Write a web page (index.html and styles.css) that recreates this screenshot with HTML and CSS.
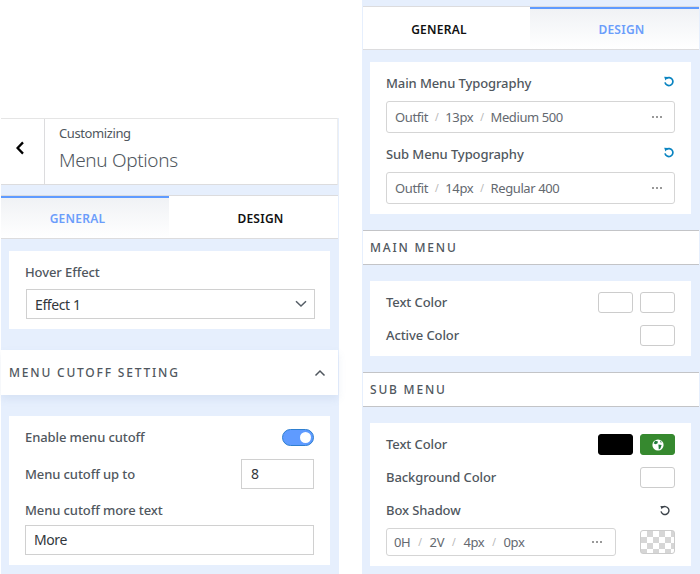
FILE: index.html
```html
<!DOCTYPE html>
<html lang="en">
<head>
<meta charset="utf-8">
<title>Menu Options</title>
<link rel="stylesheet" href="styles.css">
</head>
<body>
<div class="page">
  <section class="panel panel-left">
    <header class="head">
      <div class="back">
        <svg width="12" height="16" viewBox="0 0 12 16"><path d="M9 2.4 L3.6 8 L9 13.6" fill="none" stroke="#000" stroke-width="2.3"/></svg>
      </div>
      <div class="head-text">
        <div class="head-sub">Customizing</div>
        <div class="head-title">Menu Options</div>
      </div>
    </header>
    <div class="tabs tabs-left">
      <div class="tab tab-first tab-active">GENERAL</div>
      <div class="tab tab-second">DESIGN</div>
    </div>
    <div class="card card-hover">
      <div class="label">Hover Effect</div>
      <div class="select">
        <span>Effect 1</span>
        <svg width="12" height="8" viewBox="0 0 12 8"><path d="M1 1.2 L6 6 L11 1.2" fill="none" stroke="#555d66" stroke-width="1.5"/></svg>
      </div>
    </div>
    <div class="section section-open">
      <span>MENU CUTOFF SETTING</span>
      <svg width="12" height="8" viewBox="0 0 12 8"><path d="M1.5 6.5 L6 2 L10.5 6.5" fill="none" stroke="#50575e" stroke-width="1.5"/></svg>
    </div>
    <div class="card card-cutoff">
      <div class="row row-toggle">
        <div class="label">Enable menu cutoff</div>
        <div class="toggle"><i class="knob"></i></div>
      </div>
      <div class="row row-number">
        <div class="label">Menu cutoff up to</div>
        <div class="field field-num">8</div>
      </div>
      <div class="label label-more">Menu cutoff more text</div>
      <div class="field field-text">More</div>
    </div>
  </section>

  <section class="panel panel-right">
    <div class="tabs tabs-right">
      <div class="tab tab-first">GENERAL</div>
      <div class="tab tab-second tab-active">DESIGN</div>
    </div>
    <div class="card card-type">
      <div class="row type-label">
        <div class="label">Main Menu Typography</div>
        <svg class="reset" width="12" height="12" viewBox="0 0 12 12"><path d="M3.2 2.6 A4 4 0 1 1 2 6.4" fill="none" stroke="#0a84c1" stroke-width="1.7"/><path d="M1.2 0.8 L5.2 1 L2.4 4.4 Z" fill="#0a84c1"/></svg>
      </div>
      <div class="multi">
        <span>Outfit</span><em>/</em><span>13px</span><em>/</em><span>Medium 500</span>
        <b class="dots"></b>
      </div>
      <div class="row type-label type-label-2">
        <div class="label">Sub Menu Typography</div>
        <svg class="reset" width="12" height="12" viewBox="0 0 12 12"><path d="M3.2 2.6 A4 4 0 1 1 2 6.4" fill="none" stroke="#0a84c1" stroke-width="1.7"/><path d="M1.2 0.8 L5.2 1 L2.4 4.4 Z" fill="#0a84c1"/></svg>
      </div>
      <div class="multi">
        <span>Outfit</span><em>/</em><span>14px</span><em>/</em><span>Regular 400</span>
        <b class="dots"></b>
      </div>
    </div>
    <div class="section section-main">MAIN MENU</div>
    <div class="card card-main">
      <div class="row row-color">
        <div class="label">Text Color</div>
        <div class="swatches"><i class="swatch"></i><i class="swatch"></i></div>
      </div>
      <div class="row row-color row-gap">
        <div class="label">Active Color</div>
        <div class="swatches"><i class="swatch"></i></div>
      </div>
    </div>
    <div class="section section-sub">SUB MENU</div>
    <div class="card card-sub">
      <div class="row row-color">
        <div class="label">Text Color</div>
        <div class="swatches">
          <i class="swatch swatch-black"></i>
          <i class="swatch swatch-green">
            <svg width="12" height="12" viewBox="0 0 12 12"><circle cx="6" cy="6" r="5.6" fill="#fff"/><path d="M3.2 1.8 L6 2.6 L5.4 4.4 L3.4 5.2 L1.6 4.2 Z M6.4 5.6 L9.6 6 L8.4 9.4 L6.8 10.4 Z M8 1.6 L10 3.2 L8.6 3.6 Z" fill="#1f7a3a"/></svg>
          </i>
        </div>
      </div>
      <div class="row row-color row-gap">
        <div class="label">Background Color</div>
        <div class="swatches"><i class="swatch"></i></div>
      </div>
      <div class="row row-color row-gap">
        <div class="label">Box Shadow</div>
        <svg class="reset reset-shadow" width="12" height="12" viewBox="0 0 12 12"><path d="M3.2 2.6 A4 4 0 1 1 2 6.4" fill="none" stroke="#3c434a" stroke-width="1.4"/><path d="M1.4 1 L5 1.2 L2.6 4.2 Z" fill="#3c434a"/></svg>
      </div>
      <div class="row shadow-row">
        <div class="multi multi-shadow">
          <span>0H</span><em>/</em><span>2V</span><em>/</em><span>4px</span><em>/</em><span>0px</span>
          <b class="dots"></b>
        </div>
        <i class="swatch swatch-alpha"></i>
      </div>
    </div>
  </section>
</div>
</body>
</html>
```
FILE: styles.css
```css
* { box-sizing: border-box; }
html, body { margin: 0; padding: 0; background: #fff; }
body { font-family: "Noto Sans", "Open Sans", sans-serif; color: #50575e; overflow: hidden; }
.page { display: flex; width: 700px; height: 574px; overflow: hidden; }
.panel { width: 338px; background: #e6effd; display: flex; flex-direction: column; flex: none; }
.panel-left { margin-left: 1px; margin-top: 118px; height: 456px; padding-right: 1px; }
.panel-right { margin-left: 23px; height: 574px; padding: 6px 1px 0; }

.head { height: 67px; background: #fff; display: flex; border-top: 1px solid #e5e5e5; border-right: 1px solid #eee; border-bottom: 1px solid #dcdcde; flex: none; }
.back { width: 44px; border-right: 1px solid #dcdcde; display: flex; align-items: center; justify-content: center; padding-bottom: 7px; padding-right: 5px; }
.head-text { padding-left: 14px; }
.head-sub { font-size: 13px; line-height: 18px; margin-top: 5px; letter-spacing: -.4px; color: #50575e; }
.head-title { font-size: 19px; font-weight: 300; line-height: 27px; margin-top: 5px; letter-spacing: -.35px; color: #50575e; }

.tabs { display: flex; height: 44px; background: #fff; flex: none; border-bottom: 1px solid #dcdcde; border-top: 1px solid #dcdcde; }
.tabs-left { margin-top: 10px; }
.tab { display: flex; align-items: center; justify-content: center; font-size: 12px; font-weight: 600; letter-spacing: .25px; color: #111; border-top: 2px solid transparent; }
.tab-first { flex: 0 0 168px; padding-right: 15px; }
.tabs-right .tab-first { flex-basis: 167px; }
.tab-second { flex: 1; padding-left: 14px; }
.tab-active { color: #6b9dfb; border-top-color: #5f9bff; background: linear-gradient(#f0f2f5, #fff); }

.card { background: #fff; margin-left: 8px; margin-right: 8px; flex: none; padding: 0 16px; }
.panel-right .card { margin-left: 7px; }
.label { font-size: 13px; line-height: 18px; font-weight: 500; letter-spacing: -.1px; color: #50575e; white-space: nowrap; }
.row { display: flex; justify-content: space-between; align-items: center; }

.card-hover { margin-top: 12px; height: 78px; padding: 12px 15px 0 16px; }
.select { margin: 8px 0 0 1px; height: 30px; border: 1px solid #d0d0d0; display: flex; justify-content: space-between; align-items: center; padding: 0 7px 0 8px; font-size: 14px; letter-spacing: -.4px; color: #32373c; }

.section { background: #fff; font-size: 12px; font-weight: 500; letter-spacing: 1.8px; color: #50575e; flex: none; display: flex; align-items: center; white-space: nowrap; }
.section-open { margin-top: 21px; height: 45px; padding: 0 12px 0 8px; justify-content: space-between; box-shadow: 0 4px 8px rgba(100, 130, 180, .12); }
.card-cutoff { margin-top: 21px; height: 149px; padding: 12px 16px 0; }
.row-toggle { height: 18px; }
.toggle { width: 32px; height: 17px; border-radius: 9px; background: #5f9bff; border: 1px solid #2f7fd0; position: relative; }
.knob { position: absolute; right: 2px; top: 2px; width: 11px; height: 11px; border-radius: 50%; background: #fff; }
.row-number { margin-top: 13px; height: 30px; }
.field { border: 1px solid #d0d0d0; height: 30px; font-size: 14px; line-height: 28px; letter-spacing: -.4px; color: #32373c; background: #fff; }
.field-num { width: 73px; padding-left: 9px; }
.label-more { margin-top: 12px; }
.field-text { margin-top: 6px; padding-left: 8px; }

.card-type { margin-top: 12px; height: 152px; padding-top: 12px; }
.type-label { height: 20px; align-items: flex-start; }
.type-label .reset { margin-top: 2px; }
.type-label-2 { margin-top: 12px; }
.multi { margin-top: 7px; height: 32px; border: 1px solid #d5d5d5; border-radius: 3px; display: flex; align-items: center; padding: 0 8px; font-size: 13px; letter-spacing: -.4px; color: #646970; position: relative; }
.multi em { font-style: normal; font-size: 10px; color: #b5b5b5; margin: 0 7px; }
.dots { position: absolute; right: 12px; top: 14px; width: 10px; height: 2px; background: repeating-linear-gradient(90deg, #999 0 2px, transparent 2px 4px); }

.section-main, .section-sub { height: 35px; border-top: 1px solid #c3c4c7; border-bottom: 1px solid #c3c4c7; padding-left: 7px; margin-top: 16px; }
.card-main { margin-top: 16px; height: 75px; padding-top: 11px; }
.card-sub { margin-top: 16px; height: 143px; padding-top: 11px; }
.row-color { height: 21px; align-items: flex-start; }
.row-color .label { line-height: 20px; }
.row-gap { margin-top: 12px; }
.swatches { display: flex; gap: 7px; }
.swatch { display: flex; align-items: center; justify-content: center; width: 35px; height: 21px; border: 1px solid #ccc; border-radius: 3px; background: #fff; }
.swatch-black { background: #000; border-color: #000; }
.swatch-green { background: #36892f; border-color: #36892f; }
.reset-shadow { align-self: center; margin-right: 4px; }
.shadow-row { margin-top: 7px; }
.multi-shadow { margin-top: 0; width: 230px; height: 28px; padding: 0 7px; }
.multi-shadow em { margin: 0 8px; }
.multi-shadow .dots { top: 12px; right: 13px; }
.swatch-alpha { height: 24px; background-color: #fff; background-image: conic-gradient(#d6d6d6 25%, #fff 0 50%, #d6d6d6 0 75%, #fff 0); background-size: 12px 12px; }
```
